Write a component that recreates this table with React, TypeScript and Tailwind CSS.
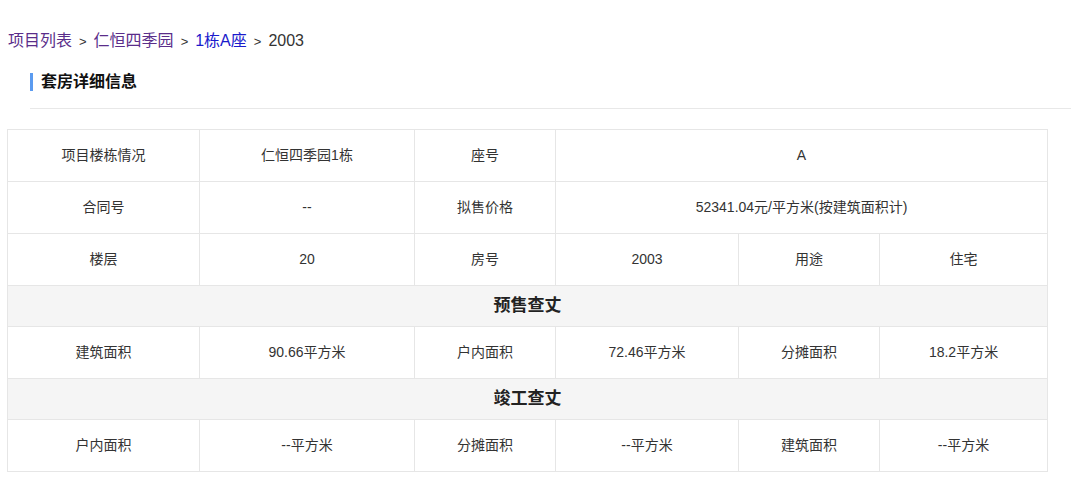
const font = { fontFamily: '"Microsoft YaHei", "Liberation Sans", "Noto Sans CJK SC", sans-serif' };

function Cell({ children, span }: { children: React.ReactNode; span?: number }) {
    return (
        <td colSpan={span} className="border border-[#e6e6e6] h-[52px] text-center align-middle text-[14px] text-[#333]">
            {children}
        </td>
    );
}

function Section({ title }: { title: string }) {
    return (
        <tr className="bg-[#f5f5f5]">
            <td colSpan={6} className="border border-[#e6e6e6] h-[41px] text-center align-middle text-[17px] font-bold text-[#222]">
                {title}
            </td>
        </tr>
    );
}

export default function App() {
    return (
        <div className="bg-white w-[1071px] min-h-[503px]" style={font}>
            <div className="pt-[31px] pl-[8px] text-[16px] leading-[20px] text-[#333]">
                <a className="text-[#5a2d8a]">项目列表</a>
                <span className="text-[13px] mx-[7px]">&gt;</span>
                <a className="text-[#5a2d8a]">仁恒四季园</a>
                <span className="text-[13px] mx-[7px]">&gt;</span>
                <a className="text-[#1a1acc]">1栋A座</a>
                <span className="text-[13px] mx-[7px]">&gt;</span>
                <span>2003</span>
            </div>
            <div className="ml-[30px] mt-[21px] border-b border-[#e8e8e8] pb-[17px]">
                <div className="flex items-center h-[18px]">
                    <div className="w-[3px] h-[18px] bg-[#5b9bf0]" />
                    <h2 className="ml-[8px] text-[16px] font-bold text-[#111]">套房详细信息</h2>
                </div>
            </div>
            <div className="pt-[20px] pl-[7px]">
                <table className="border-collapse table-fixed w-[1040px]">
                    <colgroup>
                        <col className="w-[192px]" />
                        <col className="w-[215px]" />
                        <col className="w-[141px]" />
                        <col className="w-[183px]" />
                        <col className="w-[141px]" />
                        <col className="w-[168px]" />
                    </colgroup>
                    <tbody>
                        <tr>
                            <Cell>项目楼栋情况</Cell>
                            <Cell>仁恒四季园1栋</Cell>
                            <Cell>座号</Cell>
                            <Cell span={3}>A</Cell>
                        </tr>
                        <tr>
                            <Cell>合同号</Cell>
                            <Cell>--</Cell>
                            <Cell>拟售价格</Cell>
                            <Cell span={3}>52341.04元/平方米(按建筑面积计)</Cell>
                        </tr>
                        <tr>
                            <Cell>楼层</Cell>
                            <Cell>20</Cell>
                            <Cell>房号</Cell>
                            <Cell>2003</Cell>
                            <Cell>用途</Cell>
                            <Cell>住宅</Cell>
                        </tr>
                        <Section title="预售查丈" />
                        <tr>
                            <Cell>建筑面积</Cell>
                            <Cell>90.66平方米</Cell>
                            <Cell>户内面积</Cell>
                            <Cell>72.46平方米</Cell>
                            <Cell>分摊面积</Cell>
                            <Cell>18.2平方米</Cell>
                        </tr>
                        <Section title="竣工查丈" />
                        <tr>
                            <Cell>户内面积</Cell>
                            <Cell>--平方米</Cell>
                            <Cell>分摊面积</Cell>
                            <Cell>--平方米</Cell>
                            <Cell>建筑面积</Cell>
                            <Cell>--平方米</Cell>
                        </tr>
                    </tbody>
                </table>
            </div>
        </div>
    );
}
